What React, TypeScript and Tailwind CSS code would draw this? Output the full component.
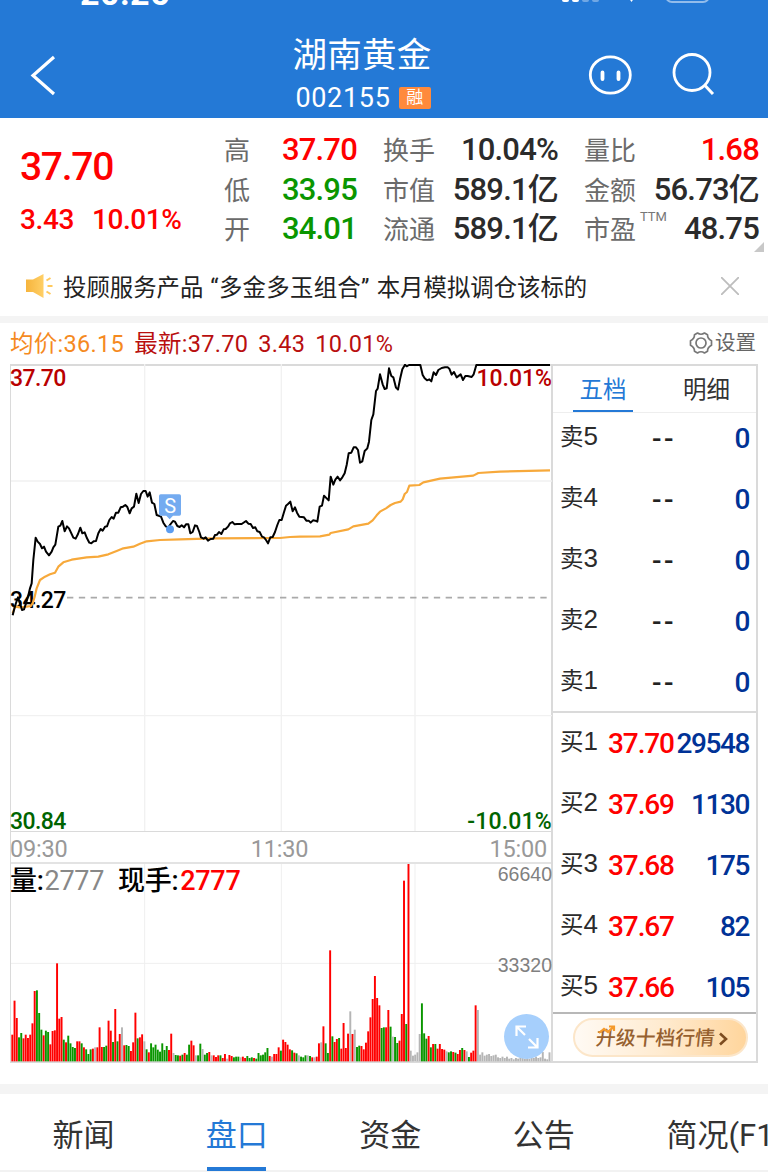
import React from 'react';

type Tone = 'red' | 'green' | 'dark';

interface Quote {
  label: string;
  value: string;
  tone: Tone;
  sup?: string;
}

interface Level {
  label: string;
  price: string;
  volume: string;
}

const toneClass: Record<Tone, string> = {
  red: 'text-[#ff0000]',
  green: 'text-[#0a9600]',
  dark: 'text-[#2b2b2b]',
};

const columns: { className: string; items: Quote[] }[] = [
  {
    className: 'ml-[224px] w-[133px]',
    items: [
      { label: '高', value: '37.70', tone: 'red' },
      { label: '低', value: '33.95', tone: 'green' },
      { label: '开', value: '34.01', tone: 'green' },
    ],
  },
  {
    className: 'ml-[26px] w-[175px]',
    items: [
      { label: '换手', value: '10.04%', tone: 'dark' },
      { label: '市值', value: '589.1亿', tone: 'dark' },
      { label: '流通', value: '589.1亿', tone: 'dark' },
    ],
  },
  {
    className: 'ml-[26px] w-[175px]',
    items: [
      { label: '量比', value: '1.68', tone: 'red' },
      { label: '金额', value: '56.73亿', tone: 'dark' },
      { label: '市盈', value: '48.75', tone: 'dark', sup: 'TTM' },
    ],
  },
];

const sells: Level[] = ['5', '4', '3', '2', '1'].map((n) => ({ label: `卖${n}`, price: '--', volume: '0' }));

const buys: Level[] = [
  { label: '买1', price: '37.70', volume: '29548' },
  { label: '买2', price: '37.69', volume: '1130' },
  { label: '买3', price: '37.68', volume: '175' },
  { label: '买4', price: '37.67', volume: '82' },
  { label: '买5', price: '37.66', volume: '105' },
];

// Chart space is three units per pixel
const pricePoints =
  '5,754 9,738 14,720 21,700 27,718 33,738 39,736 45,718 51,698 57,673 62,658 67,588 74,521 80,533 87,540 93,553 99,548 105,563 114,574 122,563 127,550 133,542 137,518 142,488 148,485 154,471 161,502 168,487 174,493 180,506 187,521 194,524 201,510 208,491 214,508 221,505 228,523 235,536 241,538 248,532 255,531 262,508 269,495 275,500 282,488 288,487 295,468 302,459 308,464 315,446 322,446 329,430 336,428 343,423 349,429 356,448 362,433 369,428 376,389 383,417 390,390 397,381 404,381 410,398 416,385 423,416 430,420 437,453 450,458 457,476 464,487 472,490 479,480 486,471 492,473 499,486 506,489 512,484 519,490 525,481 532,481 538,508 545,504 552,484 558,486 565,504 570,520 578,524 584,520 591,530 599,525 607,524 612,513 618,512 624,504 631,510 638,496 644,495 651,488 657,478 664,474 671,481 678,480 692,480 705,471 712,479 719,480 726,492 733,490 739,502 746,504 753,518 759,520 765,528 771,538 778,520 785,519 792,504 799,483 805,468 812,468 818,448 825,425 831,420 838,413 845,442 852,430 858,446 865,458 879,460 886,470 893,470 899,476 906,469 913,470 919,473 926,428 933,425 939,395 947,403 953,409 959,338 967,362 973,347 980,338 987,349 994,340 1001,328 1007,303 1013,268 1021,266 1028,250 1035,250 1041,258 1047,296 1054,292 1061,261 1069,253 1074,233 1081,168 1087,151 1095,81 1100,74 1107,31 1115,61 1121,75 1127,73 1134,13 1141,36 1147,40 1155,71 1161,77 1167,46 1174,16 1182,2 1187,7 1194,3 1228,3 1235,33 1241,43 1248,49 1255,46 1261,52 1268,25 1275,33 1282,18 1292,12 1302,10 1310,10 1315,14 1322,32 1329,24 1337,40 1349,31 1356,48 1363,36 1370,36 1382,39 1388,31 1396,3 1617,3';

const averagePoints =
  '5,748 12,728 27,730 47,728 59,726 65,718 71,698 77,673 87,648 102,638 117,631 132,626 142,608 157,595 182,587 227,580 262,578 292,571 317,561 337,553 367,548 387,539 407,532 447,528 507,526 607,523 807,522 837,519 867,518 927,517 955,512 959,507 1012,496 1027,487 1072,479 1085,469 1097,454 1107,443 1125,433 1139,423 1152,417 1169,413 1175,406 1181,390 1188,384 1195,365 1225,363 1237,355 1287,344 1387,335 1402,327 1467,323 1617,319';

// One entry per minute: direction (r up, g down, x flat) and height
const volumeBars = (
  'r80 r182 r130 g72 g85 r69 r80 r70 r80 r114 r211 g213 g145 g95 r78 g92 g88 r51 r91 r93 r294 r128 r133 g65 r57 g77 g54 g43 g40 r60 ' +
  'r60 g54 r42 g36 g22 g36 r38 x42 r42 r102 r43 g43 g47 r122 r92 g58 r157 g60 r82 x102 r48 g49 g46 r31 r57 r146 g69 r72 r81 x60 ' +
  'g36 r27 g54 g42 g50 g35 g29 g54 g34 g46 r34 r83 x25 g19 g18 r17 g20 r25 g20 g50 r62 r48 x18 g18 g53 x37 g20 g25 r28 x18 ' +
  'r18 r13 r18 g18 r10 r22 x8 r19 r16 g12 g14 g14 x12 r14 r10 g16 g10 g12 r10 g8 g25 g18 g20 g27 g40 r16 x14 r22 r22 r42 ' +
  'g32 r65 r58 r50 r36 g33 r26 g24 x18 g14 g12 g18 x18 g16 r12 x12 r14 r54 x57 r105 g54 g25 r333 g75 r58 r67 g70 r38 r115 r40 ' +
  'r83 x150 r82 x95 g43 g47 r46 r36 r56 r90 r132 r187 r256 r190 r168 g100 g102 r102 r154 g104 x74 g73 g55 r62 r142 r542 g112 r592 x32 x17 ' +
  'x20 x27 x82 g174 g84 g68 r76 g42 r52 g52 r38 r52 r37 r35 x30 g27 g30 r28 g26 r22 r34 g40 r34 x30 g13 r26 r32 r168 x154 x20 ' +
  'x27 x17 x20 x22 x16 x18 x20 x12 x10 x14 x10 x14 x8 x10 x6 x10 x8 x12 x10 x8 x12 x8 x10 x10 x14 x10 x12 x28 x8 x6 x27'
)
  .split(' ')
  .map((s) => ({ dir: s[0], height: Number(s.slice(1)) }));

const barColors: Record<string, string> = { r: '#ff0000', g: '#0a9600', x: '#b5b5b5' };

const tabs = ['新闻', '盘口', '资金', '公告', '简况(F10)'];

function StatusBar() {
  return (
    <div className="relative h-[4px] text-white">
      <span className="absolute bottom-[-7px] left-[80px] text-[34px] leading-[36px] font-bold tracking-[0.5px]">20:26</span>
      <svg className="absolute top-0 left-[560px]" width="152" height="4" fill="none">
        <rect x="2" y="-6" width="7" height="8" rx="2" fill="#fff" />
        <rect x="12" y="-6" width="7" height="8" rx="2" fill="#fff" />
        <rect x="22" y="-6" width="7" height="8" rx="2" fill="#fff" opacity=".35" />
        <rect x="32" y="-6" width="7" height="8" rx="2" fill="#fff" opacity=".35" />
        <path d="M68-3h7l-3.500 5z" fill="#fff" />
        <rect x="106" y="-18" width="43" height="20" rx="6" stroke="#fff" strokeWidth="2" opacity=".5" />
      </svg>
    </div>
  );
}

function Header() {
  return (
    <header className="h-[118px] bg-[#2479d6] text-white">
      <StatusBar />
      <div className="grid h-[114px] grid-cols-[202px_320px_246px]">
        <svg className="mt-[50px] ml-[28px]" width="32" height="44" fill="none" stroke="#fff" strokeWidth="3.2">
          <path d="M26 3 5 21.5 26 40" />
        </svg>
        <div className="flex flex-col items-center pt-[30px]">
          <h1 className="text-[34.5px] leading-[42px] tracking-[0.3px]">湖南黄金</h1>
          <div className="flex items-center pt-[4px] pl-[2px]">
            <span className="text-[27px] leading-[36px] tracking-[0.7px]">002155</span>
            <span className="ml-[8px] flex h-[22px] w-[32px] items-center justify-center rounded-[2px] bg-[#ff8a3c] pb-px text-[17px]">
              融
            </span>
          </div>
        </div>
        <div className="flex gap-[39px] pt-[48px] pl-[65px]">
          <svg width="46" height="46" fill="none" stroke="#fff" strokeWidth="2.8">
            <ellipse cx="23.300" cy="23" rx="20" ry="18.200" />
            <path d="M15.500 20.500v6.500M31.500 20.500v6.500" strokeWidth="3.800" strokeLinecap="round" />
          </svg>
          <svg width="46" height="46" fill="none" stroke="#fff" strokeWidth="2.8">
            <circle cx="20" cy="20.500" r="18" />
            <path d="m33 33.500 8 8.500" strokeWidth="3" />
          </svg>
        </div>
      </div>
    </header>
  );
}

function QuoteSummary() {
  return (
    <section className="relative flex h-[138px] pt-[12px]">
      <div className="absolute top-[26px] left-[20px] text-[#ff0000]">
        <div className="text-[39px] leading-[46px] font-medium tracking-[-1.3px]">37.70</div>
        <div className="mt-[13px] flex gap-[18px] text-[28px] leading-[34px] font-medium tracking-[-0.400px]">
          <span>3.43</span>
          <span>10.01%</span>
        </div>
      </div>
      {columns.map((col) => (
        <div key={col.items[0].label} className={col.className}>
          {col.items.map((item) => (
            <div key={item.label} className="flex h-[39.5px] items-center justify-between whitespace-nowrap">
              <span className="relative top-[2px] text-[26px] text-[#6b6b6b]">
                {item.label}
                {item.sup && (
                  <sup className="absolute top-[-1px] left-[56px] text-[13px] leading-[14px] font-normal text-[#777]">{item.sup}</sup>
                )}
              </span>
              <span className={`text-[31px] leading-[39px] font-medium tracking-[-0.8px] ${toneClass[item.tone]}`}>
                {item.value}
              </span>
            </div>
          ))}
        </div>
      ))}
      <svg className="absolute right-[4px] bottom-[4px]" width="10" height="10">
        <path d="M10 0v10H0z" fill="#c8c8c8" />
      </svg>
    </section>
  );
}

function Notice() {
  return (
    <div className="flex h-[60px] items-center pl-[25px] text-[#222]">
      <svg width="30" height="28" viewBox="0 0 30 28">
        <defs>
          <linearGradient id="horn" x1="0" x2="1">
            <stop offset="0" stopColor="#f6b43c" />
            <stop offset="1" stopColor="#ffcf66" />
          </linearGradient>
        </defs>
        <path d="M1 7.500h7L18.500 2v24L8 20H1z" fill="url(#horn)" />
        <path d="m21.500 8.500 4-2.500M22.500 14h5M21.500 19.500l4 2.500" stroke="#ffc95c" strokeWidth="2" />
      </svg>
      <p className="mt-[5px] ml-[8px] flex gap-[7px] text-[23.4px] whitespace-nowrap">
        <span>投顾服务产品</span>
        <span className="tracking-[0.3px]">“多金多玉组合”</span>
        <span>本月模拟调仓该标的</span>
      </p>
      <svg className="mr-[29px] ml-auto" width="18" height="18" stroke="#bdbdbd" strokeWidth="1.800">
        <path d="m0 0 18 18M18 0 0 18" />
      </svg>
    </div>
  );
}

function ChartInfo() {
  return (
    <div className="flex h-[41px] items-center pt-[3px] pr-[12px] pl-[10px] text-[23.500px] tracking-[0.300px] whitespace-nowrap">
      <span className="text-[#f58a1f]">均价:36.15</span>
      <span className="ml-[10px] text-[#b90f0f]">最新:37.70</span>
      <span className="ml-[10px] text-[#b90f0f]">3.43</span>
      <span className="ml-[10px] text-[#b90f0f]">10.01%</span>
      <div className="ml-auto flex items-center gap-[2px] pb-[4px] text-[20.500px] tracking-normal text-[#666]">
        <svg width="24" height="24" viewBox="0 0 24 24" fill="none" stroke="#777" strokeWidth="1.700">
          <path d="M8.500 2Q12 4.500 15.500 2L18.500 3.700Q18.500 7.800 22.500 9.700V14.300Q18.500 16.200 18.500 20.300L15.500 22Q12 19.500 8.500 22L5.500 20.300Q5.500 16.200 1.500 14.300V9.700Q5.500 7.800 5.500 3.700Z" strokeLinejoin="round" />
          <circle cx="12" cy="12" r="5" />
        </svg>
        设置
      </div>
    </div>
  );
}

function PriceChart() {
  return (
    <div className="relative h-[467px] text-[23px] leading-[26px] font-medium tracking-[-0.6px]">
      <span className="absolute top-[2px] left-[-1px] text-[#b90000]">37.70</span>
      <span className="absolute top-[2px] right-[-1px] tracking-normal text-[#b90000]">10.01%</span>
      <span className="absolute top-[224px] left-[-1px] text-black">34.27</span>
      <span className="absolute bottom-[-4px] left-[-1px] text-[#006400]">30.84</span>
      <span className="absolute right-[-1px] bottom-[-4px] tracking-[0.2px] text-[#006400]">-10.01%</span>
      <svg className="relative block" width="541" height="467" viewBox="0 0 1623 1401" fill="none">
        <path d="M401 0V1401M811 0V1401M1212 0V1401M0 351H1623M0 1055H1623" stroke="#f1f1f1" strokeWidth="4" />
        <path d="M168 701H1612" stroke="#aaa" strokeWidth="5" strokeDasharray="19 16.500" />
        <polyline points={averagePoints} stroke="#f7a93b" strokeWidth="6.500" strokeLinejoin="round" />
        <polyline points={pricePoints} stroke="#000" strokeWidth="6" strokeLinejoin="round" />
        <path d="M449 391h56q5 0 5 5v54q0 5-5 5h-19l-10 11-10-11h-17q-5 0-5-5v-54q0-5 5-5Z" fill="#74abf0" />
        <circle cx="477" cy="496" r="12" fill="#5c9df0" />
      </svg>
      <span className="absolute top-[130px] left-[148px] w-[22px] text-center text-[20px] leading-[24px] font-normal text-white">S</span>
    </div>
  );
}

function VolumeChart() {
  return (
    <div className="relative h-[200px] border-t-2 border-[#e3e3e3]">
      <svg className="block" width="541" height="198" viewBox="0 6 1623 594">
        <path d="M401 0V600M811 0V600M1212 0V600M0 304H1623" stroke="#efefef" strokeWidth="3" />
        {volumeBars.map((bar, i) => (
          <rect key={i} x={1 + i * 6.715} y={598 - bar.height} width="5.800" height={bar.height} fill={barColors[bar.dir]} />
        ))}
      </svg>
      <div className="absolute top-0 left-[-1px] flex text-[27px] leading-[34px] font-medium tracking-[-0.3px] whitespace-nowrap text-black">
        <span>量:</span>
        <span className="ml-px font-normal text-[#888]">2777</span>
        <span className="ml-[14px]">现手:</span>
        <span className="ml-[2px] text-[#ff0000]">2777</span>
      </div>
      <span className="absolute top-[-1px] right-[-1px] font-['Liberation_Sans'] text-[19.500px] leading-[22px] text-[#808080]">66640</span>
      <span className="absolute top-[90px] right-[-1px] font-['Liberation_Sans'] text-[19.500px] leading-[22px] text-[#808080]">33320</span>
      <button className="absolute right-[2px] bottom-[3px] flex size-[45px] items-center justify-center rounded-full bg-[#a6cffc]">
        <svg width="24" height="24" fill="none" stroke="#fff" strokeWidth="2.200">
          <path d="M1.500 11V1.500H11M2 2l8 8M22.500 13v9.500H13M22 22l-8-8" />
        </svg>
      </button>
    </div>
  );
}

function LevelRow({ level, priceClass }: { level: Level; priceClass: string }) {
  return (
    <div className="flex h-12 items-center pr-[7px] pl-[7px]">
      <span className="mb-[3px] w-[48px] shrink-0 text-[23.500px] text-[#2b2b2b]">
        {level.label[0]}
        <span className="font-['Liberation_Sans'] text-[26px]">{level.label[1]}</span>
      </span>
      <span className={`mt-px shrink-0 text-[28px] font-medium ${priceClass}`}>{level.price}</span>
      <span className="mt-px ml-auto text-[28px] font-medium tracking-[-1.4px] text-[#003296]">{level.volume}</span>
    </div>
  );
}

function OrderBook() {
  return (
    <aside className="flex w-[207px] flex-col border-2 border-[#dadada]">
      <div className="flex h-[47px] justify-between border-b border-[#eee] pr-[26px] pl-[20px] text-[23.500px]">
        <button className="w-[60px] border-b-2 border-[#2479d6] pt-[6px] text-[#2479d6]">五档</button>
        <button className="pt-[4px] text-[#333]">明细</button>
      </div>
      <div className="flex h-[298px] flex-col gap-[13px] pt-[1px]">
        {sells.map((level) => (
          <LevelRow key={level.label} level={level} priceClass="ml-[44px] text-[#222] tracking-[2.500px]" />
        ))}
      </div>
      <div className="flex h-[303px] flex-col gap-[13px] border-t-2 border-b-2 border-t-[#dadada] border-b-[#b8b8b8] pt-[6px]">
        {buys.map((level) => (
          <LevelRow key={level.label} level={level} priceClass="text-[#ff0000] tracking-[-1.100px]" />
        ))}
      </div>
      <div className="flex flex-1 items-center justify-end pr-[8px]">
        <button className="relative flex h-[39px] w-[175px] items-center justify-center rounded-full border-2 border-[#fce6c9] bg-linear-to-r from-[#fffaf4] via-[#ffebd0] to-[#ffd59c] pt-[3px] pl-[4px] text-[19.800px] font-medium whitespace-nowrap text-[#96602f]">
          <span className="-skew-x-6">升级十档行情</span>
          <svg className="ml-[4px]" width="11" height="14" fill="none" stroke="#7d4c20" strokeWidth="2.600">
            <path d="m2 1.500 6 5.500-6 5.500" />
          </svg>
          <svg className="absolute top-[5px] left-[23px]" width="18" height="10" fill="none" stroke="#f59a2c" strokeWidth="2.200">
            <path d="m1 8 5-4 4 3 6-5.500M11 1.500h5V6" />
          </svg>
        </button>
      </div>
    </aside>
  );
}

export default function App() {
  return (
    <div className="h-[1174px] w-[768px] overflow-hidden bg-white font-[Roboto,'Noto_Sans_CJK_SC',sans-serif]">
      <Header />
      <QuoteSummary />
      <Notice />
      <div className="h-[7px] bg-[#f4f4f4]" />
      <ChartInfo />
      <main className="flex h-[699px] pl-[10px]">
        <div className="w-[541px] border-t-2 border-b-2 border-l border-[#dadada]">
          <div className="-mt-[2px]">
            <PriceChart />
          </div>
          <div className="flex h-[31px] items-center justify-between border-t border-[#dadada] pt-[5px] pr-[4px] text-[23.500px] tracking-[-0.2px] text-[#999]">
            <span className="-ml-px">09:30</span>
            <span className="pl-[2px]">11:30</span>
            <span>15:00</span>
          </div>
          <VolumeChart />
        </div>
        <OrderBook />
      </main>
      <div className="mt-[21px] h-[10px] bg-[#f4f4f4]" />
      <nav className="flex h-[78px] border-b-2 border-[#f2f2f2] pl-[7px] text-[31px] text-[#333]">
        {tabs.map((tab) => (
          <button key={tab} className="flex w-[153.500px] shrink-0 justify-center whitespace-nowrap first:w-[153px] last:w-auto last:pl-[46px]">
            <span
              className={
                tab === '盘口'
                  ? 'flex h-[77px] w-[59px] items-center justify-center border-b-4 border-[#2479d6] pt-[11px] text-[#2479d6]'
                  : 'flex h-[77px] items-center pt-[7px]'
              }
            >
              {tab}
            </span>
          </button>
        ))}
      </nav>
    </div>
  );
}
